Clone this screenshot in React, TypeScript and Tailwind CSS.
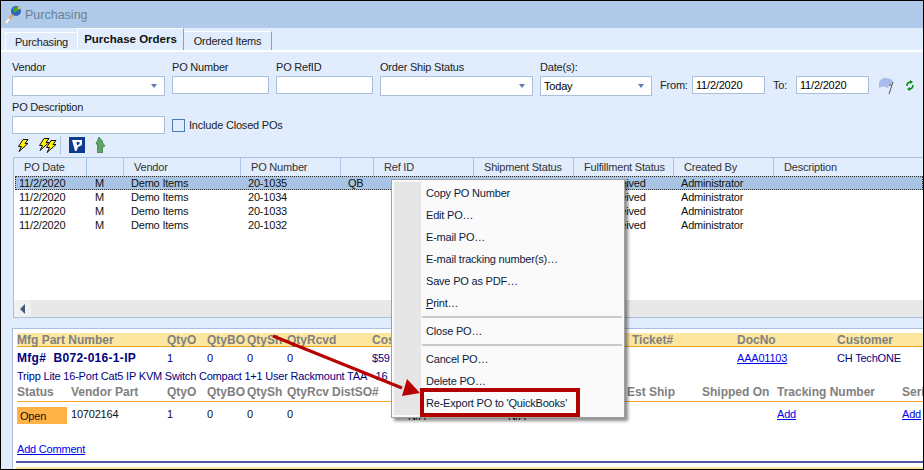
const font = "font-['Liberation_Sans',sans-serif]";

const poRows = [
  { num: "20-1035", ref: "QB", sel: true },
  { num: "20-1034", ref: "" },
  { num: "20-1033", ref: "" },
  { num: "20-1032", ref: "" },
];

const menu: (string | null)[] = [
  "Copy PO Number",
  "Edit PO…",
  "E-mail PO…",
  "E-mail tracking number(s)…",
  "Save PO as PDF…",
  "Print…",
  null,
  "Close PO…",
  null,
  "Cancel PO…",
  "Delete PO…",
  "Re-Export PO to 'QuickBooks'",
];

const headers = ["PO Date", "", "Vendor", "PO Number", "", "Ref ID", "Shipment Status", "Fulfillment Status", "Created By", "Description"];
const gridCols = "grid grid-cols-[73px_37px_117px_100px_33px_100px_100px_100px_100px_1fr]";
const lineCols = "grid grid-cols-[150px_40px_40px_40px_85px_260px_105px_100px_1fr]";
const vendorCols = "grid grid-cols-[54px_96px_40px_40px_40px_45px_76px_100px_119px_75px_75px_125px_1fr]";

function Bolt({ x = 0, y = 0 }: { x?: number; y?: number }) {
  return (
    <polygon
      points="6,0.5 11,0.5 8,4.5 11,4.5 2,12.5 4.5,7.5 1.5,7.5"
      transform={`translate(${x} ${y})`}
      fill="#fff200"
      stroke="#111"
      strokeWidth="1"
    />
  );
}

function TextBox({ w, h = "h-[18px]", value, arrow }: { w: string; h?: string; value?: string; arrow?: boolean }) {
  return (
    <div className={`${w} ${h} bg-white border border-[#a9bfdc] flex items-center justify-between pl-[3px] pr-[7px] text-black`}>
      <span>{value}</span>
      {arrow && <span className="w-0 h-0 border-x-[3px] border-x-transparent border-t-[4px] border-t-[#5b7db1]" />}
    </div>
  );
}

function Field({ label, w, h, value, arrow }: { label: string; w: string; h?: string; value?: string; arrow?: boolean }) {
  return (
    <div className="flex flex-col">
      <div className="h-[16px] leading-[15px] text-[#222]">{label}</div>
      <TextBox w={w} h={h} value={value} arrow={arrow} />
    </div>
  );
}

export default function App() {
  return (
    <div className={`${font} relative w-[924px] h-[470px] overflow-hidden bg-[#e1edfc] border border-black text-[11px] tracking-[-0.2px] leading-[14px] flex flex-col`}>
      {/* title bar */}
      <div className="h-[27px] bg-[#b0cbe9] flex items-center pl-[3px] gap-[3px] shrink-0">
        <svg width="18" height="20" viewBox="0 0 18 20">
          <line x1="2" y1="18" x2="9" y2="9" stroke="#e8a24a" strokeWidth="2" />
          <line x1="2" y1="18" x2="5" y2="14" stroke="#fff" strokeWidth="2" />
          <circle cx="12" cy="6" r="5" fill="#2f62c4" />
          <path d="M9 3 L13 2 L14 6 L10 8 Z" fill="#3da53a" />
          <circle cx="15" cy="3" r="1.5" fill="#e4c12f" />
        </svg>
        <span className="text-[12.5px] tracking-normal text-[#6b7f99]">Purchasing</span>
      </div>

      {/* tabs */}
      <div className="h-[22px] flex items-end pl-[4px] shrink-0">
        <div className="w-[72px] h-[18px] border-t border-l border-white flex items-center justify-center text-[#222]">Purchasing</div>
        <div className="w-[107px] h-[22px] border-t border-l border-r border-t-white border-l-white border-r-[#7fa3cc] flex items-center justify-center font-bold text-[11.5px] tracking-normal text-[#111] pb-[2px]">Purchase Orders</div>
        <div className="w-[88px] h-[19px] border-t border-r border-t-white border-r-[#7fa3cc] flex items-center justify-center text-[#222]">Ordered Items</div>
      </div>

      {/* filters */}
      <div className="h-[107px] shrink-0 border-t-2 border-t-white pl-[11px] pt-[8px] flex flex-col">
        <div className="flex items-start gap-[7px]">
          <Field label="Vendor" w="w-[153px]" h="h-[20px]" arrow />
          <Field label="PO Number" w="w-[97px]" />
          <Field label="PO RefID" w="w-[97px]" />
          <Field label="Order Ship Status" w="w-[153px]" h="h-[20px]" arrow />
          <Field label="Date(s):" w="w-[112px]" h="h-[20px]" value="Today" arrow />
          <div className="flex items-center mt-[16px] h-[18px]">
            <span className="ml-[1px] w-[32px] text-[#222]">From:</span>
            <TextBox w="w-[73px]" value="11/2/2020" />
            <span className="ml-[8px] w-[23px] text-[#222]">To:</span>
            <TextBox w="w-[73px]" value="11/2/2020" />
            <svg className="ml-[9px]" width="16" height="18" viewBox="0 0 16 18">
              <path d="M1 12 L1 7 C2 3 5 2 8 2 C11 2 14 3 15 6 L13 8 L11 9 L10 13 C8 10 4 10 1 12 Z" fill="#a7bcea" />
              <path d="M15 6 L11 18" stroke="#555" strokeWidth="1" />
              <path d="M11 9 L14 9" stroke="#555" strokeWidth="1" />
            </svg>
            <svg className="ml-[12px]" width="8" height="11" viewBox="0 0 8 11">
              <path d="M1 6 C1 3 2.5 2 5 2 M7 5 C7 8 5.5 9 3 9" fill="none" stroke="#0a8a0a" strokeWidth="1.6" />
              <path d="M4 0 L7 2 L4 4 Z M4 7 L1 9 L4 11 Z" fill="#0a8a0a" />
            </svg>
          </div>
        </div>
        <div className="flex items-end gap-[7px] mt-[4px]">
          <Field label="PO Description" w="w-[153px]" />
          <div className="flex items-center gap-[4px] h-[18px]">
            <div className="w-[13px] h-[13px] border border-[#4d7cb0] bg-[#e1edfc]" />
            <span className="text-[#222]">Include Closed POs</span>
          </div>
        </div>
        <div className="flex items-center h-[20px] mt-[1px] pl-[5px]">
          <svg width="12" height="13" viewBox="0 0 12 13"><Bolt /></svg>
          <svg className="ml-[9px]" width="19" height="15" viewBox="0 0 19 15"><Bolt /><Bolt x={7} y={2} /></svg>
          <div className="w-px h-[19px] bg-[#a9c6ea] ml-[3px]" />
          <svg className="ml-[8px]" width="16" height="16" viewBox="0 0 16 16">
            <rect width="16" height="16" fill="#0f3c8f" />
            <path d="M3 3 H13 V8 L9 10 L7.5 14 H6 Z" fill="#fff" />
            <path d="M7.5 5 H10.5 V7 L8 8.5 Z" fill="#0f3c8f" />
          </svg>
          <svg className="ml-[10px]" width="11" height="16" viewBox="0 0 11 16">
            <path d="M4 0 L8 5 H7 L10 9 L7.5 10.5 V16 H2.5 V7 H1 Z" fill="#5fa463" stroke="#2f7a3a" strokeWidth="0.7" />
          </svg>
        </div>
      </div>

      {/* PO grid */}
      <div className="h-[161px] shrink-0 ml-[12px] border border-r-0 border-[#a9bfdc] bg-white flex flex-col">
        <div className={`${gridCols} h-[18px] bg-[#e1edfc] shrink-0 whitespace-nowrap`}>
          {headers.map((h, i) => (
            <div key={i} className={`flex items-center pl-[10px] text-[#333] ${i < 9 ? "border-r border-[#a9c6ea]" : ""}`}>{h}</div>
          ))}
        </div>
        <div className="flex-1 pl-[1px]">
          {poRows.map((r) => (
            <div
              key={r.num}
              className={`${gridCols} h-[14px] items-center text-[#111] whitespace-nowrap ${r.sel ? "bg-[#a8c4e4] outline-1 outline-dotted outline-[#333] -outline-offset-1" : ""}`}
            >
              <span className="pl-[4px]">11/2/2020</span>
              <span className="pl-[7px]">M</span>
              <span className="pl-[6px]">Demo Items</span>
              <span className="pl-[6px]">{r.num}</span>
              <span className="pl-[6px]">{r.ref}</span>
              <span />
              <span />
              <span className="pl-[7px]">Not Received</span>
              <span className="pl-[6px]">Administrator</span>
              <span />
            </div>
          ))}
        </div>
        <div className="h-[17px] bg-[#e8e8e8] shrink-0 flex">
          <div className="w-[17px] bg-[#f0f0f0] flex items-center justify-center">
            <span className="w-0 h-0 border-y-[5px] border-y-transparent border-r-[5px] border-r-[#41597a]" />
          </div>
        </div>
      </div>

      {/* line detail */}
      <div className="flex-1 mt-[10px] ml-[11px] border-l border-t border-[#a9bfdc] bg-white pl-[4px] pt-[4px] flex flex-col min-h-0">
        <div className={`${lineCols} h-[14px] bg-[#fde7a0] border-b border-[#f5a623] items-center font-bold text-[12px] tracking-normal text-[#808080] shrink-0`}>
          {["Mfg Part Number", "QtyO", "QtyBO", "QtySh", "QtyRcvd", "Cost", "Ticket#", "DocNo", "Customer"].map((h) => (
            <span key={h}>{h}</span>
          ))}
        </div>
        <div className={`${lineCols} h-[22px] items-center text-[#000080] shrink-0`}>
          <span className="font-bold text-[12px] tracking-[0.3px] whitespace-nowrap">Mfg#&nbsp;&nbsp;B072-016-1-IP</span>
          <span>1</span>
          <span>0</span>
          <span>0</span>
          <span>0</span>
          <span>$59</span>
          <span />
          <span className="text-[#0000ee] underline">AAA01103</span>
          <span>CH TechONE</span>
        </div>
        <div className="h-[14px] text-[#000080] whitespace-nowrap shrink-0">Tripp Lite 16-Port Cat5 IP KVM Switch Compact 1+1 User Rackmount TAA&nbsp;&nbsp;&nbsp;16</div>
        <div className={`${vendorCols} h-[19px] border-b border-[#f5a623] items-center font-bold text-[12px] tracking-normal text-[#808080] whitespace-nowrap shrink-0`}>
          {["Status", "Vendor Part", "QtyO", "QtyBO", "QtySh", "QtyRcv", "DistSO#", "", "", "Est Ship", "Shipped On", "Tracking Number", "Serial"].map((h, i) => (
            <span key={i}>{h}</span>
          ))}
        </div>
        <div className={`${vendorCols} h-[17px] mt-[5px] text-[#111] shrink-0`}>
          <span className="w-[50px] h-[17px] bg-[#ffb347] pl-[3px] flex items-center">Open</span>
          <span>10702164</span>
          <span>1</span>
          <span>0</span>
          <span>0</span>
          <span>0</span>
          <span />
          <span className="pt-[2px]">N/A</span>
          <span className="pt-[2px]">N/A</span>
          <span />
          <span />
          <span className="text-[#0000ee] underline">Add</span>
          <span className="text-[#0000ee] underline">Add</span>
        </div>
        <div className="h-[14px] mt-[18px] text-[#0000ee] underline shrink-0">Add Comment</div>
        <div className="h-[2px] mt-[5px] -ml-[1px] bg-[#5058a8] shrink-0" />
        <div className="flex-1 mt-[4px] -ml-[1px] bg-[#fde7a0]" />
      </div>

      {/* context menu */}
      <div className="absolute left-[390px] top-[178px] w-[234px] h-[239px] bg-[#fafafa] border border-[#a0a0a0] shadow-[3px_3px_3px_rgba(0,0,0,0.45)] pl-[2px] pt-[2px] flex">
        <div className="w-[27px] h-[233px] bg-[#e6e6e6] shrink-0" />
        <div className="flex-1 pl-[1px] pr-[2px]">
          {menu.map((item, i) =>
            item === null ? (
              <div key={i} className="h-[6px] flex items-center">
                <div className="w-full h-[2px] bg-[#c8c8c8]" />
              </div>
            ) : (
              <div key={i} className="h-[22px] pl-[4px] flex items-center text-[#0c1a40]">
                {item === "Print…" ? <span><u>P</u>rint…</span> : item}
              </div>
            ),
          )}
        </div>
      </div>

      {/* callout */}
      <div className="absolute left-[419px] top-[387px] w-[160px] h-[29px] border-4 border-[#b00000]" />
      <svg className="absolute left-[-1px] top-[-1px] pointer-events-none" width="924" height="470" viewBox="0 0 924 470">
        <line x1="273" y1="336" x2="402" y2="388" stroke="#b80000" strokeWidth="3" />
        <polygon points="420,393 402,396 407,379" fill="#b80000" />
      </svg>
    </div>
  );
}
